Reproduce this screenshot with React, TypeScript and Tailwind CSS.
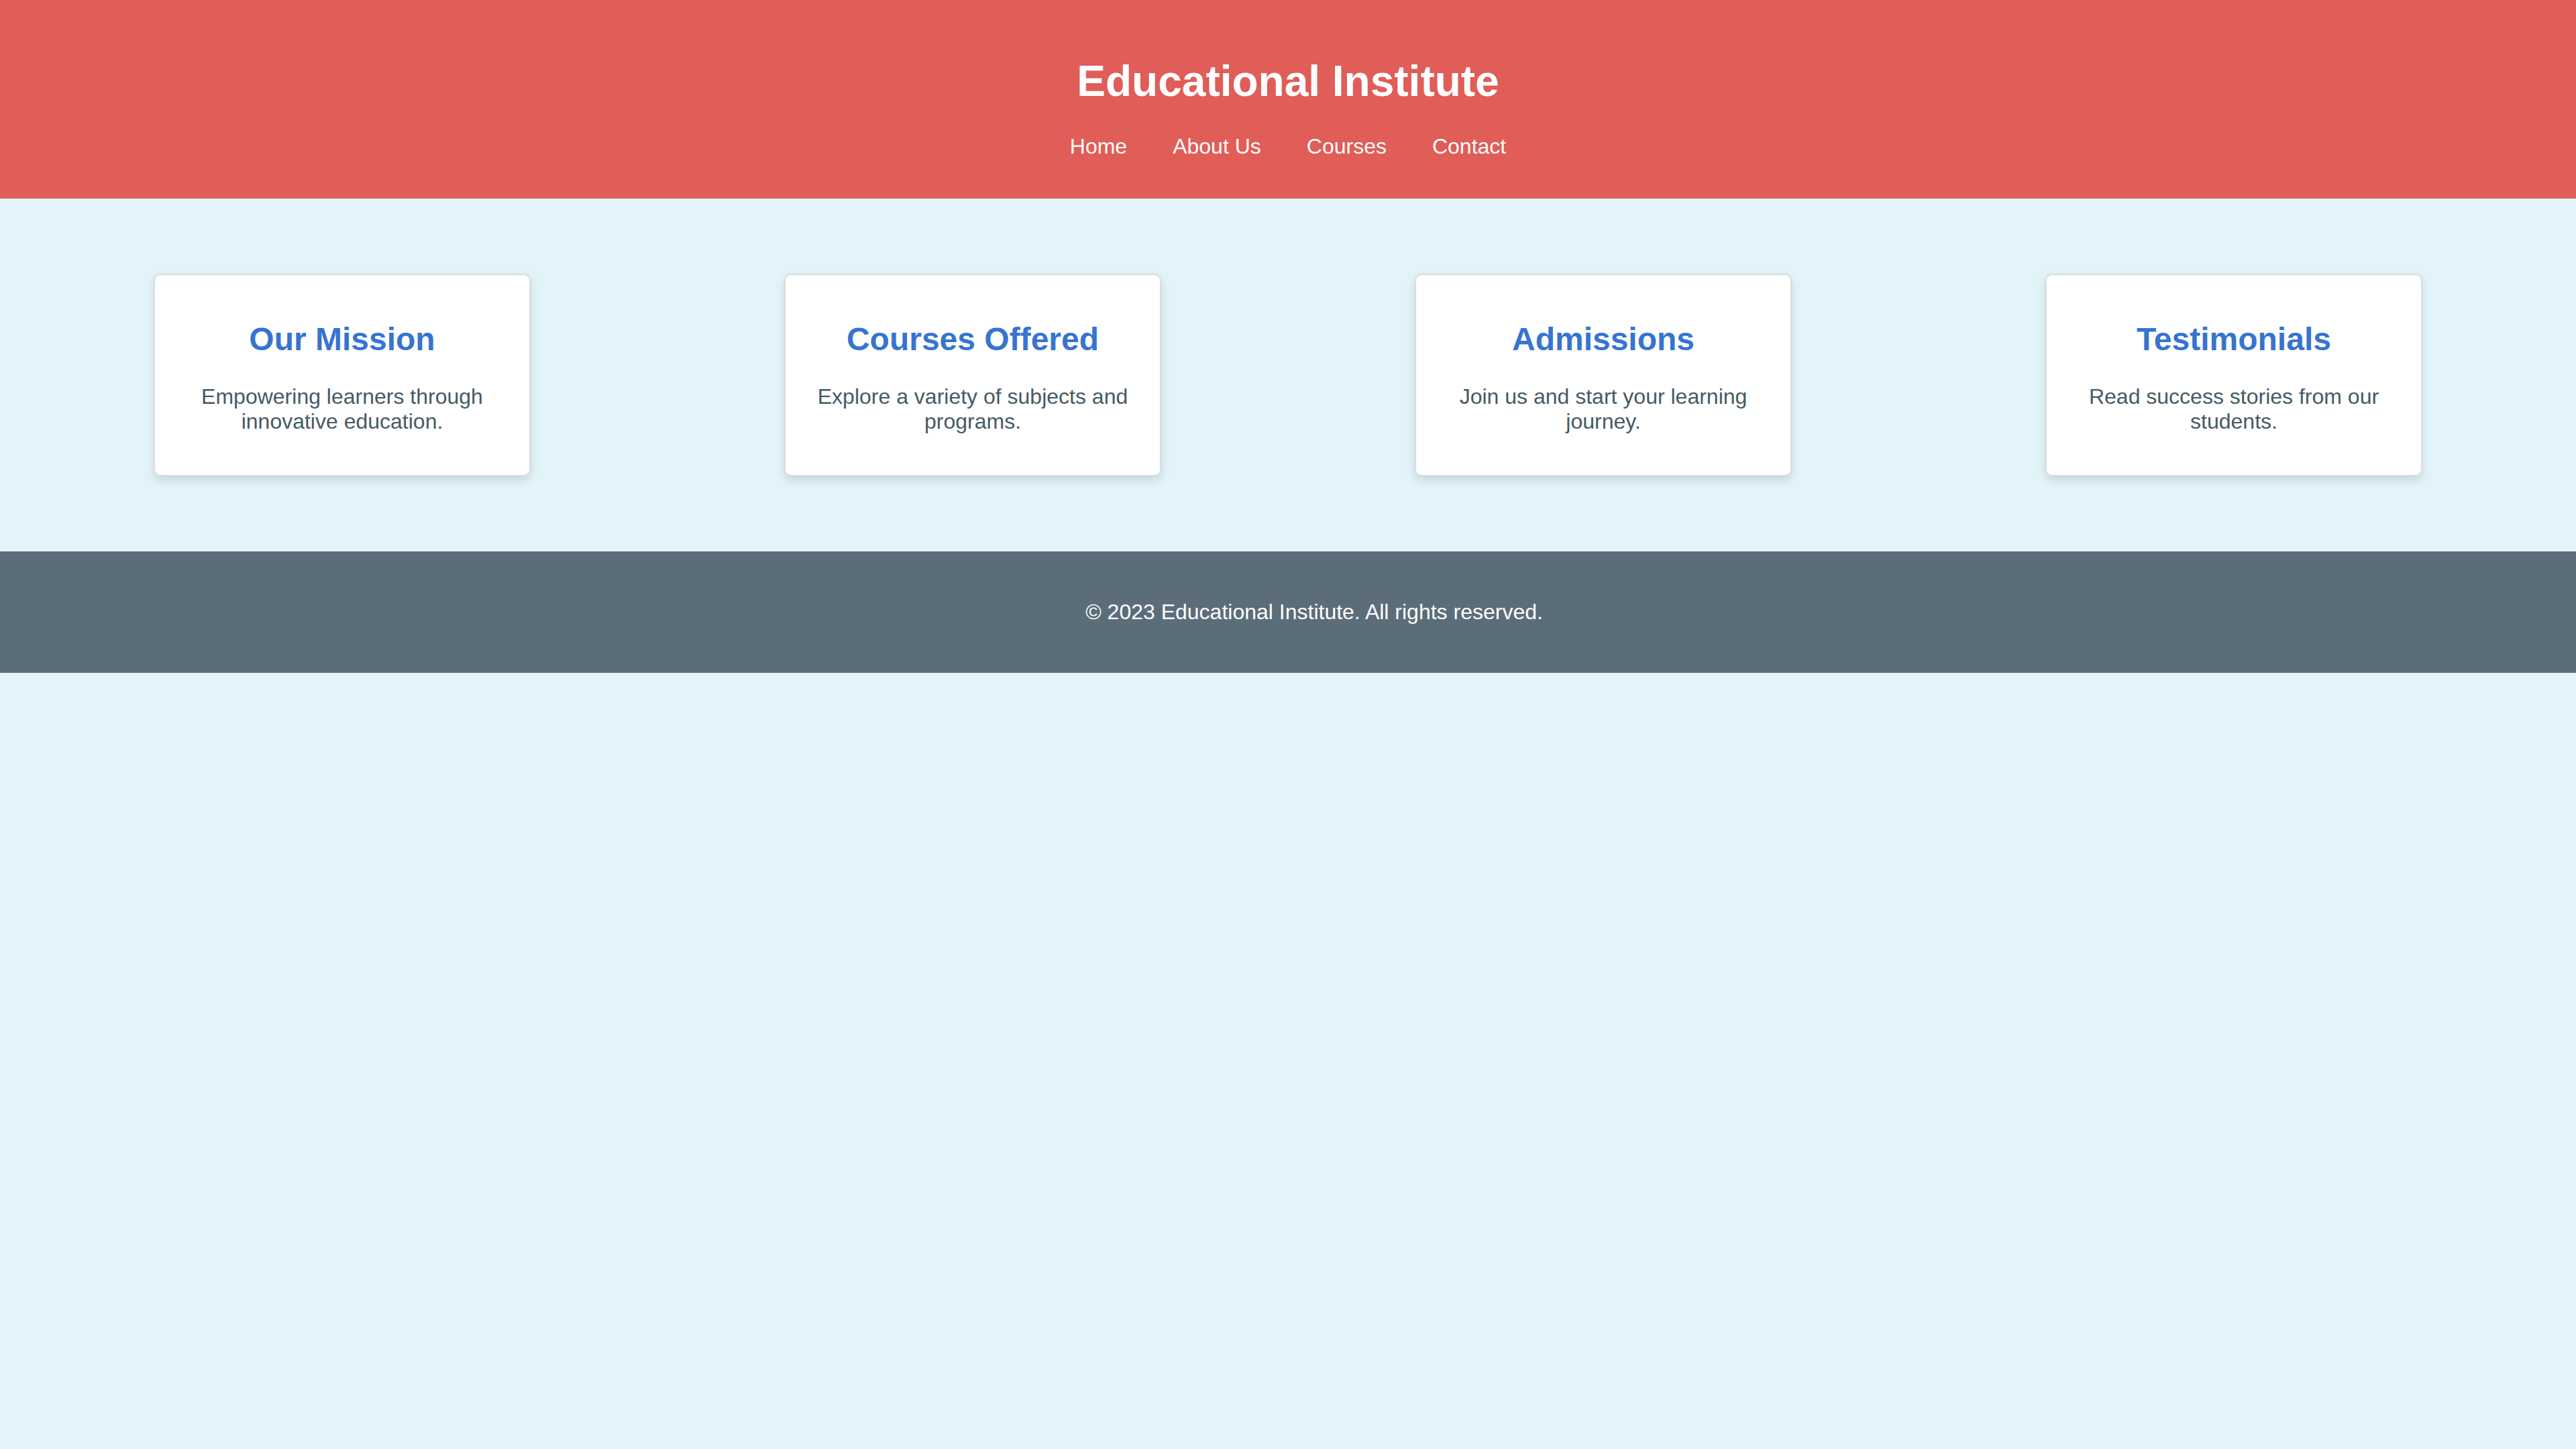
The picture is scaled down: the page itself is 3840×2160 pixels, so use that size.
const NAV_LINKS = ['Home', 'About Us', 'Courses', 'Contact']

const CARDS = [
  { title: 'Our Mission', text: 'Empowering learners through innovative education.' },
  { title: 'Courses Offered', text: 'Explore a variety of subjects and programs.' },
  { title: 'Admissions', text: 'Join us and start your learning journey.' },
  { title: 'Testimonials', text: 'Read success stories from our students.' },
]

function InfoCard({ title, text }: { title: string; text: string }) {
  return (
    <div className="w-[562px] rounded-[10px] border-2 border-[#dcdcdc] bg-white px-[38px] pt-[68px] pb-[61px] text-center shadow-[0_6px_14px_rgba(0,0,0,0.12)]">
      <h2 className="mb-[40px] text-[48px] font-bold leading-[55px] text-[#3674d0]">{title}</h2>
      <p className="text-[32px] leading-[37px] text-[#455a64]">{text}</p>
    </div>
  )
}

export default function App() {
  return (
    <div
      className="min-h-screen bg-[#e2f4f9]"
      style={{ fontFamily: '"Liberation Sans", Arial, sans-serif' }}
    >
      {/* Header */}
      <header className="flex flex-col items-center bg-[#e05d58] pt-[84px] pb-[59px] text-white">
        <h1 className="mb-[42px] text-[64px] font-bold leading-[74px]">Educational Institute</h1>
        <nav className="flex gap-[68px] text-[32px] leading-[37px]">
          {NAV_LINKS.map((link) => (
            <a key={link} href="#" className="text-white">
              {link}
            </a>
          ))}
        </nav>
      </header>

      {/* Cards */}
      <main className="flex justify-around px-[40px] py-[112px]">
        {CARDS.map((c) => (
          <InfoCard key={c.title} title={c.title} text={c.text} />
        ))}
      </main>

      {/* Footer */}
      <footer className="flex justify-center bg-[#5c6d7a] py-[72px] pl-[78px] text-white">
        <p className="text-[32px] leading-[37px]">© 2023 Educational Institute. All rights reserved.</p>
      </footer>
    </div>
  )
}
